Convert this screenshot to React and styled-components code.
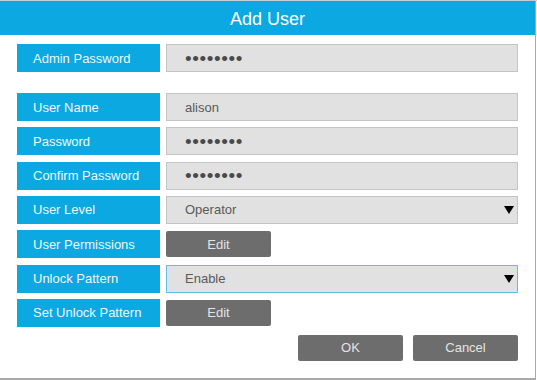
import React from 'react'
import styled, { createGlobalStyle } from 'styled-components'

const GlobalStyle = createGlobalStyle`
  html, body {
    margin: 0;
    padding: 0;
    background: #ffffff;
    font-family: "Liberation Sans", Arial, sans-serif;
  }
`

const Page = styled.div`
  width: 537px;
  height: 380px;
  overflow: hidden;
  display: flex;
  flex-direction: column;
  background: #ffffff;
`

const BackStrip = styled.div`
  height: 1px;
  background: #c3cdd2;
  flex: none;
`

const Dialog = styled.div`
  width: 535px;
  flex: 1;
  display: flex;
  flex-direction: column;
  background: #ffffff;
  border-right: 1px solid #a9a9a9;
  border-bottom: 2px solid #a9a9a9;
`

const Header = styled.div`
  height: 34px;
  flex: none;
  background: #0ba8e1;
  color: #ffffff;
  font-size: 18px;
  display: flex;
  align-items: center;
  justify-content: center;
  padding-top: 2px;
  box-sizing: border-box;
`

const Body = styled.div`
  padding: 9px 17px 0 17px;
  display: flex;
  flex-direction: column;
`

const Group = styled.div`
  display: flex;
  flex-direction: column;
  gap: 6.33px;
  margin-top: ${p => p.$top || 0}px;
`

const Row = styled.div`
  display: grid;
  grid-template-columns: 143px 1fr;
  column-gap: 6px;
  height: 28px;
  align-items: center;
`

const Label = styled.div`
  height: 28px;
  background: #0ba8e1;
  color: #eef8fd;
  font-size: 13px;
  display: flex;
  align-items: center;
  padding-left: 16px;
  box-sizing: border-box;
`

const Field = styled.div`
  height: 28px;
  background: #e1e1e1;
  border: 1px solid ${p => (p.$focus ? '#62bfe2' : '#c4c4c4')};
  box-sizing: border-box;
  color: #5a5a5a;
  font-size: 13px;
  display: flex;
  align-items: center;
  justify-content: space-between;
  padding: 0 2px 0 18px;
`

const Dots = styled.span`
  font-size: 19px;
  color: #4a4a4a;
  letter-spacing: 0.6px;
  line-height: 1;
`

const Arrow = styled.svg`
  width: 10px;
  height: 8px;
  margin-right: 1px;
`

const GrayButton = styled.button`
  width: 105px;
  height: 26px;
  border: none;
  border-radius: 2px;
  background: #6d6d6d;
  color: #e4e4e4;
  font-family: "Liberation Sans", Arial, sans-serif;
  font-size: 13px;
  padding: 0;
`

const Footer = styled.div`
  display: flex;
  justify-content: flex-end;
  gap: 10px;
  margin-top: 8px;
`

const Select = ({ value, focus }) => (
  <Field $focus={focus}>
    <span>{value}</span>
    <Arrow viewBox="0 0 10 8">
      <polygon points="0,0 10,0 5,8" fill="#000" />
    </Arrow>
  </Field>
)

const Password = () => (
  <Field>
    <Dots>••••••••</Dots>
  </Field>
)

export default function App() {
  return (
    <Page>
      <GlobalStyle />
      <BackStrip />
      <Dialog>
        <Header>Add User</Header>
        <Body>
          <Group>
            <Row>
              <Label>Admin Password</Label>
              <Password />
            </Row>
          </Group>
          <Group $top={21}>
            <Row>
              <Label>User Name</Label>
              <Field>alison</Field>
            </Row>
            <Row>
              <Label>Password</Label>
              <Password />
            </Row>
            <Row>
              <Label>Confirm Password</Label>
              <Password />
            </Row>
            <Row>
              <Label>User Level</Label>
              <Select value="Operator" />
            </Row>
            <Row>
              <Label>User Permissions</Label>
              <div><GrayButton>Edit</GrayButton></div>
            </Row>
            <Row>
              <Label>Unlock Pattern</Label>
              <Select value="Enable" focus />
            </Row>
            <Row>
              <Label>Set Unlock Pattern</Label>
              <div><GrayButton>Edit</GrayButton></div>
            </Row>
          </Group>
          <Footer>
            <GrayButton>OK</GrayButton>
            <GrayButton>Cancel</GrayButton>
          </Footer>
        </Body>
      </Dialog>
    </Page>
  )
}
